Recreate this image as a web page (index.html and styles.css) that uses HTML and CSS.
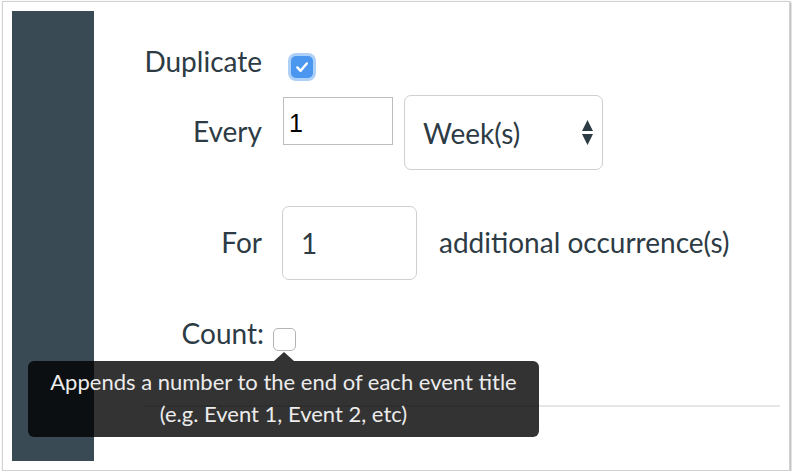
FILE: index.html
```
<!DOCTYPE html>
<html lang="en">
<head>
<meta charset="utf-8">
<title>Duplicate event</title>
<link rel="stylesheet" href="styles.css">
</head>
<body>
<div class="window">
  <div class="sidebar"></div>
  <div class="content">
    <div class="row row-dup">
      <div class="label">Duplicate</div>
      <span class="check check-on">
        <svg viewBox="0 0 22 22" width="22" height="22"><path d="M6.3 11.4 L9.6 14.8 L15.8 7.4" fill="none" stroke="#fff" stroke-width="2.4" stroke-linecap="round" stroke-linejoin="round"/></svg>
      </span>
    </div>
    <div class="row row-every">
      <div class="label pad">Every</div>
      <input class="plain-input" type="text" value="1">
      <div class="select-wrap">
        <select class="select"><option>Week(s)</option></select>
        <svg class="select-arrows" viewBox="0 0 11 25" width="11" height="25"><path d="M5.5 0 L11 11 L0 11 Z M0 14 L11 14 L5.5 25 Z" fill="#2d3b45"/></svg>
      </div>
    </div>
    <div class="row row-for">
      <div class="label pad">For</div>
      <input class="round-input" type="text" value="1">
      <div class="after pad">additional occurrence(s)</div>
    </div>
    <div class="row row-count">
      <div class="label label-count">Count:</div>
      <span class="check check-off"></span>
    </div>
    <div class="separator"></div>
  </div>
  <div class="tooltip">Appends a number to the end of each event title<br>(e.g. Event 1, Event 2, etc)</div>
</div>
</body>
</html>
```
FILE: styles.css
```
html, body {
  margin: 0;
  padding: 0;
  background: #ffffff;
}
body {
  font-family: Lato, "Open Sans", sans-serif;
  color: #2d3b45;
}
.window {
  position: relative;
  box-sizing: border-box;
  width: 788px;
  height: 470px;
  margin: 1px 0 0 2px;
  border: 1px solid #d2d2d2;
  box-shadow: 1px 1px 2px rgba(0, 0, 0, 0.35);
  padding: 9px 9px 9px 9px;
  display: flex;
  background: #fff;
}
.sidebar {
  flex: none;
  width: 82px;
  height: 450px;
  background: #3a4a54;
}
.content {
  flex: 1;
  padding-top: 30px;
}
.row {
  display: flex;
  align-items: flex-start;
}
.label {
  flex: none;
  width: 168px;
  text-align: right;
  font-size: 28px;
  line-height: 40px;
}
.pad {
  padding-top: 16px;
}
.row-dup {
  height: 54px;
}
.check {
  flex: none;
  box-sizing: border-box;
  display: block;
  width: 22px;
  height: 22px;
  border-radius: 5px;
  margin-top: 15px;
}
.check svg {
  display: block;
}
.check-on {
  margin-left: 29px;
  background: #4b97ef;
  box-shadow: 0 0 0 3px #acd0f7;
}
.row-every {
  height: 75px;
}
.plain-input {
  box-sizing: border-box;
  width: 110px;
  height: 48px;
  margin: 2px 0 0 21px;
  padding: 8px 5px 4px 5px;
  border: 1px solid #bdbdbd;
  border-radius: 0;
  font-family: "Liberation Sans", Arial, sans-serif;
  font-size: 25px;
  color: #000;
  outline: none;
}
.select-wrap {
  position: relative;
  margin-left: 11px;
}
.select {
  display: block;
  box-sizing: border-box;
  width: 199px;
  height: 75px;
  padding: 0 0 0 18px;
  border: 1px solid #cfcfcf;
  border-radius: 7px;
  background: #fff;
  appearance: none;
  -webkit-appearance: none;
  font-family: Lato, sans-serif;
  font-size: 28px;
  color: #2d3b45;
  outline: none;
}
.select-arrows {
  position: absolute;
  left: 178px;
  top: 25px;
}
.row-for {
  margin-top: 36px;
  height: 74px;
}
.round-input {
  box-sizing: border-box;
  width: 135px;
  height: 74px;
  margin-left: 20px;
  padding: 0 0 0 18px;
  border: 1px solid #cfcfcf;
  border-radius: 7px;
  font-family: Lato, sans-serif;
  font-size: 28px;
  color: #2d3b45;
  outline: none;
}
.after {
  margin-left: 22px;
  font-size: 28px;
  line-height: 40px;
}
.row-count {
  margin-top: 33px;
  height: 40px;
}
.label-count {
  width: 170px;
}
.check-off {
  width: 23px;
  height: 23px;
  margin-left: 9px;
  border: 1px solid #b4b4b4;
  background: #fff;
}
.separator {
  margin: 52px 0 0 49px;
  height: 0;
  border-top: 2px solid #e6e6e6;
}
.tooltip {
  position: absolute;
  left: 25px;
  top: 359px;
  box-sizing: border-box;
  width: 511px;
  height: 76px;
  padding-top: 5px;
  border-radius: 6px;
  background: rgba(0, 0, 0, 0.8);
  color: #ececec;
  font-family: Lato, sans-serif;
  font-size: 22px;
  line-height: 32px;
  text-align: center;
}
.tooltip::before {
  content: "";
  position: absolute;
  left: 246px;
  top: -9px;
  border-left: 10px solid transparent;
  border-right: 10px solid transparent;
  border-bottom: 9px solid rgba(0, 0, 0, 0.8);
}
```
